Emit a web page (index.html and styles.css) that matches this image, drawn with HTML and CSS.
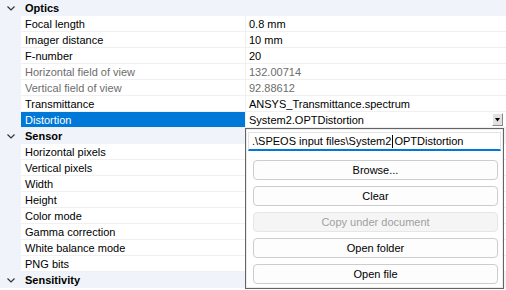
FILE: index.html
```html
<!DOCTYPE html>
<html lang="en">
<head>
  <meta charset="UTF-8">
  <title>Properties</title>
  <link rel="stylesheet" href="styles.css">
</head>
<body>

  <div class="grid">
    <div class="row cat">
      <span class="gut"><svg width="8" height="5" viewBox="0 0 8 5"><path d="M0.5 0.5 L4 4 L7.5 0.5" fill="none" stroke="#333" stroke-width="1.2"/></svg></span>
      <span class="name">Optics</span>
    </div>
    <div class="row"><span class="gut"></span><span class="name">Focal length</span><span class="val">0.8 mm</span></div>
    <div class="row"><span class="gut"></span><span class="name">Imager distance</span><span class="val">10 mm</span></div>
    <div class="row"><span class="gut"></span><span class="name">F-number</span><span class="val">20</span></div>
    <div class="row off"><span class="gut"></span><span class="name">Horizontal field of view</span><span class="val">132.00714</span></div>
    <div class="row off"><span class="gut"></span><span class="name">Vertical field of view</span><span class="val">92.88612</span></div>
    <div class="row"><span class="gut"></span><span class="name">Transmittance</span><span class="val">ANSYS_Transmittance.spectrum</span></div>
    <div class="row sel">
      <span class="gut"></span>
      <span class="name">Distortion</span>
      <span class="val">System2.OPTDistortion<span class="drop"><svg width="5" height="4" viewBox="0 0 5 4"><path d="M0 0 H5 L2.5 3.5 Z" fill="#000"/></svg></span></span>
    </div>
    <div class="row cat">
      <span class="gut"><svg width="8" height="5" viewBox="0 0 8 5"><path d="M0.5 0.5 L4 4 L7.5 0.5" fill="none" stroke="#333" stroke-width="1.2"/></svg></span>
      <span class="name">Sensor</span>
    </div>
    <div class="row"><span class="gut"></span><span class="name">Horizontal pixels</span><span class="val"></span></div>
    <div class="row"><span class="gut"></span><span class="name">Vertical pixels</span><span class="val"></span></div>
    <div class="row"><span class="gut"></span><span class="name">Width</span><span class="val"></span></div>
    <div class="row"><span class="gut"></span><span class="name">Height</span><span class="val"></span></div>
    <div class="row"><span class="gut"></span><span class="name">Color mode</span><span class="val"></span></div>
    <div class="row"><span class="gut"></span><span class="name">Gamma correction</span><span class="val"></span></div>
    <div class="row"><span class="gut"></span><span class="name">White balance mode</span><span class="val"></span></div>
    <div class="row"><span class="gut"></span><span class="name">PNG bits</span><span class="val"></span></div>
    <div class="row cat">
      <span class="gut"><svg width="8" height="5" viewBox="0 0 8 5"><path d="M0.5 0.5 L4 4 L7.5 0.5" fill="none" stroke="#333" stroke-width="1.2"/></svg></span>
      <span class="name">Sensitivity</span>
    </div>
  </div>

  <!-- file editor dropdown -->
  <div class="popup">
    <div class="path">.\SPEOS input files\System2<span class="caret"></span>OPTDistortion</div>
    <button class="btn">Browse...</button>
    <button class="btn">Clear</button>
    <button class="btn" disabled>Copy under document</button>
    <button class="btn">Open folder</button>
    <button class="btn">Open file</button>
  </div>

</body>
</html>
```

FILE: styles.css
```css
body {
  margin: 0;
  background: #fff;
  font-family: 'Liberation Sans', Arial, sans-serif;
  font-size: 11px;
  color: #000;
  width: 506px;
  height: 290px;
  overflow: hidden;
  position: relative;
}

.grid {
  display: flex;
  flex-direction: column;
}

.row {
  display: grid;
  grid-template-columns: 21px 225px 1fr;
  height: 16px;
}

.gut {
  background: #f0f4fa;
  display: flex;
  align-items: center;
  justify-content: center;
  padding-top: 1px;
}

.name, .val {
  display: flex;
  align-items: center;
  border-bottom: 1px solid #f0f0f0;
  white-space: nowrap;
  overflow: hidden;
}

.name {
  padding-left: 4px;
  border-right: 1px solid #f0f0f0;
}

.val {
  padding-left: 3px;
  padding-right: 3px;
  justify-content: space-between;
}

.cat {
  background: #f0f4fa;
  grid-template-columns: 21px 1fr;
}

.cat .name {
  font-weight: bold;
  border: none;
}

.off .name, .off .val {
  color: #6d6d6d;
}

.sel .name {
  background: #0078d7;
  color: #fff;
}

.drop {
  width: 11px;
  height: 13px;
  box-sizing: border-box;
  background: #e1e1e1;
  border: 1px solid;
  border-color: #fff #8a8a8a #8a8a8a #fff;
  display: flex;
  align-items: center;
  justify-content: center;
}

.popup {
  position: absolute;
  left: 245px;
  top: 128px;
  width: 259px;
  height: 161px;
  box-sizing: border-box;
  border: 1px solid #646464;
  box-shadow: inset 0 0 0 1px #ececec;
  background: #fff;
  padding: 3px 2px;
  display: flex;
  flex-direction: column;
  gap: 6px;
}

.path {
  height: 19px;
  box-sizing: border-box;
  border: 1px solid #e3e3e3;
  border-bottom: 2px solid #0078d7;
  padding-left: 3px;
  display: flex;
  align-items: center;
  white-space: nowrap;
  margin-bottom: 3px;
}

.caret {
  display: inline-block;
  width: 1px;
  height: 13px;
  background: #000;
  margin: 0 1px;
}

.btn {
  margin: 0 3px 0 5px;
  height: 20px;
  border: 1px solid #cdcdcd;
  border-radius: 4px;
  background: #fdfdfd;
  font: inherit;
  color: #000;
  padding: 0;
}

.btn:disabled {
  background: #f5f5f5;
  border-color: #e6e6e6;
  color: #a0a0a0;
}
```
